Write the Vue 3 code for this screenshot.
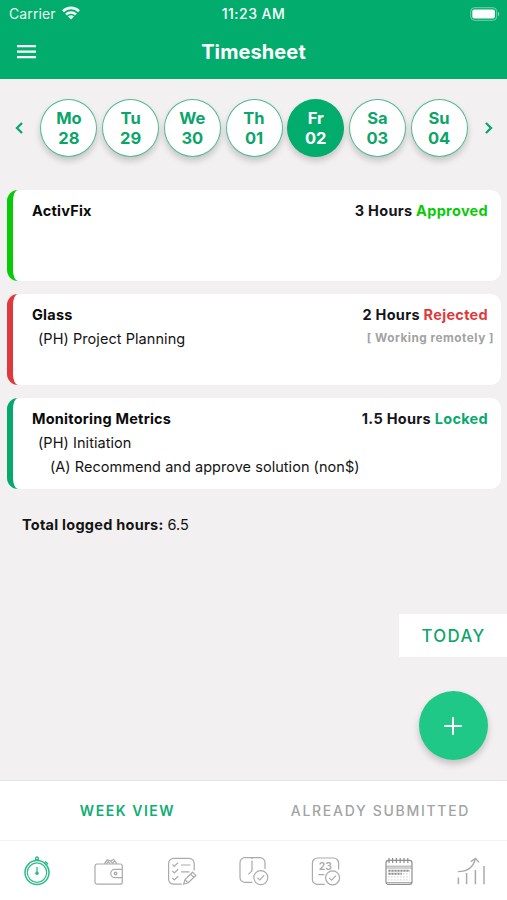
<template>
  <div class="screen">
    <header class="header">
      <div class="status-bar">
        <div class="carrier">
          <span>Carrier</span>
          <svg width="18" height="14" viewBox="0 0 18 14" fill="none" stroke="#fff" stroke-width="2.6">
            <path d="M1 5.2a11.4 11.4 0 0 1 16 0" />
            <path d="M4 8.5a7.1 7.1 0 0 1 10 0" />
            <path d="M9 13.6L6 10.6a4.3 4.3 0 0 1 6 0z" fill="#fff" stroke="none" />
          </svg>
        </div>
        <div class="time">11:23 AM</div>
        <div class="battery">
          <svg width="30" height="14" viewBox="0 0 30 14">
            <rect x="0.7" y="0.7" width="26" height="12.6" rx="3.8" fill="none" stroke="#fff" stroke-opacity="0.45" stroke-width="1" />
            <rect x="2.3" y="2.4" width="22.6" height="9.2" rx="2" fill="#fff" />
            <path d="M28 4.8a2.5 2.5 0 0 1 0 4.4z" fill="#fff" fill-opacity="0.5" />
          </svg>
        </div>
      </div>
      <div class="title-bar">
        <button class="menu-btn">
          <svg width="19" height="14" viewBox="0 0 19 14" stroke="#fff" stroke-width="2.2">
            <path d="M0 1.2h19M0 6.7h19M0 12.2h19" />
          </svg>
        </button>
        <h1>Timesheet</h1>
        <span></span>
      </div>
    </header>

    <main class="content">
      <div class="week">
        <button class="arrow">
          <svg width="8" height="12" viewBox="0 0 8 12" fill="none" stroke="#07a86d" stroke-width="2.3">
            <path d="M7 1L2 6l5 5" />
          </svg>
        </button>
        <div class="days">
          <button
            v-for="day in days"
            :key="day.date"
            :class="['day', { active: day.date === selected }]"
            @click="selected = day.date"
          >
            <span>{{ day.name }}</span>
            <span>{{ day.date }}</span>
          </button>
        </div>
        <button class="arrow">
          <svg width="8" height="12" viewBox="0 0 8 12" fill="none" stroke="#07a86d" stroke-width="2.3">
            <path d="M1 1l5 5-5 5" />
          </svg>
        </button>
      </div>

      <div class="entries">
        <div v-for="entry in entries" :key="entry.project" :class="['entry', entry.status.toLowerCase()]">
          <div class="entry-left">
            <div class="project">{{ entry.project }}</div>
            <div v-if="entry.phase" class="phase">{{ entry.phase }}</div>
            <div v-if="entry.activity" class="activity">{{ entry.activity }}</div>
          </div>
          <div class="entry-right">
            <div class="hours">{{ entry.hours }} Hours <span class="status">{{ entry.status }}</span></div>
            <div v-if="entry.note" class="note">[ {{ entry.note }} ]</div>
          </div>
        </div>
      </div>

      <div class="total"><b>Total logged hours:</b> 6.5</div>

      <div class="actions">
        <button class="today">TODAY</button>
        <button class="add">
          <svg width="18" height="18" viewBox="0 0 18 18" stroke="#fff" stroke-width="2" stroke-linecap="round">
            <path d="M9 1v16M1 9h16" />
          </svg>
        </button>
      </div>
    </main>

    <div class="segments">
      <button :class="['segment', { active: tab === 'week' }]" @click="tab = 'week'">WEEK VIEW</button>
      <button :class="['segment', { active: tab === 'submitted' }]" @click="tab = 'submitted'">ALREADY SUBMITTED</button>
    </div>

    <nav class="tabs">
      <!-- stopwatch -->
      <button class="tab active">
        <svg viewBox="0 0 30 30">
          <circle cx="15" cy="16.6" r="12" stroke-width="1.5" />
          <circle cx="15" cy="16.6" r="9.7" />
          <path d="M13.8 4.8V3M16.2 4.8V3M22.3 7.6l2-2M24 9.2l1.8-1.8M23.2 5.4l2.8 2.6M15 11v6" stroke-width="1.3" />
          <circle cx="15" cy="2.4" r="1.4" stroke-width="1.3" />
          <circle cx="15" cy="17.2" r="1.2" fill="currentColor" />
        </svg>
      </button>
      <!-- wallet -->
      <button class="tab">
        <svg viewBox="0 0 30 30">
          <path d="M28.3 13.4V10a2 2 0 0 0-2-2H3a2 2 0 0 0-2 2v16a2.2 2.2 0 0 0 2.2 2.2h23a2 2 0 0 0 2-2v-4.6" />
          <path d="M28.3 13.4h-7.5a4 4 0 0 0 0 8.2h7.5z" />
          <circle cx="21.6" cy="17.5" r="1.3" />
          <path d="M10.4 7.8l2.8-4 3.4 1.2 2.6 2.8M12.6 7.6l1.6-2 2 2M16.6 5l3-1.6 3.4 4.4M19 6.4l1.6-.8" />
        </svg>
      </button>
      <!-- checklist -->
      <button class="tab">
        <svg viewBox="0 0 30 30">
          <path d="M27.2 14.5V7.4a5 5 0 0 0-5-5H6.6a5 5 0 0 0-5 5v15.8a5 5 0 0 0 5 5h8.2" />
          <path d="M5.4 8.4l1.9 1.9L11.2 6.6M5.4 15l1.9 1.9 3.9-3.7M5.4 22l1.9 1.9 3.9-3.7M14 9h9.4M14 15.8h8.4" />
          <path d="M16.6 28.2l1.4-4.6 7.6-7.4 3.2 3.2-7.6 7.4zM23.6 18.2l3.2 3.2M18 23.6l3.2 3.2" />
        </svg>
      </button>
      <!-- clock -->
      <button class="tab">
        <svg viewBox="0 0 30 30">
          <path d="M26 13V6.6a5 5 0 0 0-5-5H6a5 5 0 0 0-5 5v14.8a5 5 0 0 0 5 5h7.4" />
          <path d="M13 4.4v10.4l-3.6 3.6M13 2v1" />
          <circle cx="21.8" cy="21.6" r="7" />
          <path d="M18.4 21.6l2.4 2.4 4.4-4.6" />
        </svg>
      </button>
      <!-- date -->
      <button class="tab">
        <svg viewBox="0 0 30 30">
          <path d="M27.6 13.4V7a5 5 0 0 0-5-5H6.4a5 5 0 0 0-5 5v16.4a5 5 0 0 0 5 5h7.4M7.4 18.6h6" />
          <text x="14.4" y="13.8" text-anchor="middle">23</text>
          <circle cx="21.6" cy="21.8" r="7" />
          <path d="M18.2 21.8l2.4 2.4 4.4-4.6" />
        </svg>
      </button>
      <!-- calendar -->
      <button class="tab dark">
        <svg viewBox="0 0 30 30">
          <rect x="2" y="4.4" width="26" height="24" rx="2.4" />
          <path d="M2.4 10.2h25.4M2.4 12h25.4M2.4 26.6h25.4" stroke-width="0.8" />
          <path d="M5 2v5M8.6 2v5M12.4 2v5M16.2 2v5M20 2v5M23.8 2v5" />
          <path d="M4.4 14.8h21.4M4.4 17.8h13.4" stroke-width="2" stroke-dasharray="2.2 0.8" />
          <path d="M19.4 17.8h6.4M4.4 20.8h21.4M4.4 23.8h21.4" stroke-width="1.2" stroke-dasharray="1 2" opacity="0.5" />
        </svg>
      </button>
      <!-- chart -->
      <button class="tab">
        <svg viewBox="0 0 30 30">
          <path d="M2.4 21.4v6.8M10.6 17v11.2M19.4 14v14.2M28 10v18.2" stroke-width="1.5" />
          <path d="M1.8 15.6c8.4 0 15.4-3.6 17.6-13M14.8 5.6l4.8-3.2 3.4 4" stroke-width="1.4" />
        </svg>
      </button>
    </nav>
  </div>
</template>

<script setup>
import { ref } from 'vue'

const selected = ref('02')
const tab = ref('week')

const days = [
  { name: 'Mo', date: '28' },
  { name: 'Tu', date: '29' },
  { name: 'We', date: '30' },
  { name: 'Th', date: '01' },
  { name: 'Fr', date: '02' },
  { name: 'Sa', date: '03' },
  { name: 'Su', date: '04' }
]

const entries = [
  { project: 'ActivFix', hours: 3, status: 'Approved' },
  {
    project: 'Glass',
    phase: '(PH) Project Planning',
    hours: 2,
    status: 'Rejected',
    note: 'Working remotely'
  },
  {
    project: 'Monitoring Metrics',
    phase: '(PH) Initiation',
    activity: '(A) Recommend and approve solution (non$)',
    hours: 1.5,
    status: 'Locked'
  }
]
</script>

<style>
body {
  background: #f2f0f1;
}
</style>

<style scoped>
.screen {
  display: flex;
  flex-direction: column;
  width: 507px;
  height: 900px;
  overflow: hidden;
  background: #f2f0f1;
  font-family: Inter, "Liberation Sans", sans-serif;
  color: #141414;
}

button {
  padding: 0;
  border: none;
  background: none;
  font-family: inherit;
  cursor: pointer;
}

.header {
  flex: none;
  height: 79px;
  background: #02ac6c;
  color: #fff;
}

.status-bar {
  display: grid;
  grid-template-columns: 1fr auto 1fr;
  align-items: center;
  height: 27px;
  padding: 0 7px 0 9px;
  font-size: 14px;
}

.carrier {
  display: flex;
  align-items: center;
  gap: 6px;
  letter-spacing: 0.1px;
  opacity: 0.92;
}

.carrier svg {
  margin-top: -2px;
}

.time {
  margin-right: 2px;
  font-size: 14px;
  font-weight: 500;
  letter-spacing: 0.45px;
}

.battery {
  display: flex;
  justify-content: flex-end;
}

.title-bar {
  display: grid;
  grid-template-columns: 1fr auto 1fr;
  align-items: center;
  height: 50px;
  padding: 0 17px;
}

.menu-btn {
  display: flex;
}

.title-bar h1 {
  margin: 0;
  font-size: 20px;
  font-weight: 700;
  letter-spacing: 0.1px;
}

.content {
  flex: 1;
  min-height: 0;
}

.week {
  display: flex;
  align-items: center;
  justify-content: space-between;
  height: 58px;
  padding: 20px 14px 0 15px;
}

.arrow {
  display: flex;
}

.days {
  display: flex;
  gap: 4.7px;
}

.day {
  display: flex;
  flex-direction: column;
  align-items: center;
  justify-content: center;
  box-sizing: border-box;
  width: 57px;
  height: 58px;
  border: 1px solid #4fbb8f;
  border-radius: 50%;
  background: #fff;
  box-shadow: 0 4px 6px rgba(0, 0, 0, 0.18);
  color: #0ba56b;
  font-size: 16.5px;
  font-weight: 700;
  line-height: 20.5px;
}

.day.active {
  border-color: #02ac6c;
  background: #02ac6c;
  color: #fff;
}

.entries {
  display: flex;
  flex-direction: column;
  gap: 13px;
  margin: 33px 6px 0 7px;
}

.entry {
  display: flex;
  justify-content: space-between;
  box-sizing: border-box;
  height: 91px;
  padding: 9px 13px 0 19px;
  border-left: 6px solid #07a86d;
  border-radius: 11px;
  background: #fff;
  font-size: 14.5px;
  line-height: 23.8px;
}

.entry.approved {
  border-left-color: #0aca07;
}

.entry.rejected {
  border-left-color: #df393c;
}

.project {
  color: #0b0b0b;
  font-weight: 700;
  letter-spacing: 0.23px;
}

.phase {
  padding-left: 6px;
  letter-spacing: 0.06px;
}

.activity {
  padding-left: 18px;
  letter-spacing: 0.04px;
}

.entry-right {
  display: flex;
  flex-direction: column;
  align-items: flex-end;
}

.hours {
  color: #15151c;
  font-weight: 700;
  letter-spacing: 0.3px;
}

.status {
  color: #07a86d;
}

.approved .status {
  color: #0aca07;
}

.rejected .status {
  color: #df393c;
}

.note {
  margin-right: -6px;
  color: #a3a3a3;
  font-size: 11.8px;
  font-weight: 700;
  letter-spacing: 0.5px;
  line-height: 22px;
}

.total {
  margin: 26px 22px 0;
  font-size: 14.5px;
  line-height: 20px;
}

.total b {
  letter-spacing: 0.25px;
}

.actions {
  display: flex;
  flex-direction: column;
  align-items: flex-end;
  gap: 34px;
  margin-top: 79px;
}

.today {
  width: 108px;
  height: 43px;
  padding-left: 1px;
  background: #fff;
  color: #0ba56b;
  font-size: 16.8px;
  font-weight: 500;
  letter-spacing: 1.4px;
}

.add {
  display: flex;
  align-items: center;
  justify-content: center;
  width: 69px;
  height: 69px;
  margin-right: 19.5px;
  border-radius: 50%;
  background: #20c888;
  box-shadow: 0 4px 7px rgba(0, 0, 0, 0.2);
}

.segments {
  flex: none;
  display: flex;
  box-sizing: border-box;
  height: 61px;
  border-top: 1px solid #e6e4e5;
  border-bottom: 1px solid #f2f2f2;
  background: #fff;
}

.segment {
  flex: 1;
  color: #a3a3a3;
  font-size: 14px;
  font-weight: 500;
  letter-spacing: 1.7px;
}

.segment.active {
  padding-left: 1px;
  color: #0fae74;
  font-weight: 600;
  letter-spacing: 1.55px;
}

.tabs {
  flex: none;
  display: flex;
  box-sizing: border-box;
  height: 59px;
  padding-left: 1px;
  background: #fff;
}

.tab {
  flex: 1;
  display: flex;
  align-items: center;
  justify-content: center;
  color: #aaa;
}

.tab.active {
  color: #2dbb89;
}

.tab.dark {
  color: #8e8e8e;
}

.tab svg {
  width: 30px;
  height: 30px;
  fill: none;
  stroke: currentColor;
  stroke-width: 1.2;
}

.tab text {
  fill: currentColor;
  stroke: none;
  font-size: 10.5px;
  font-weight: 600;
}
</style>
